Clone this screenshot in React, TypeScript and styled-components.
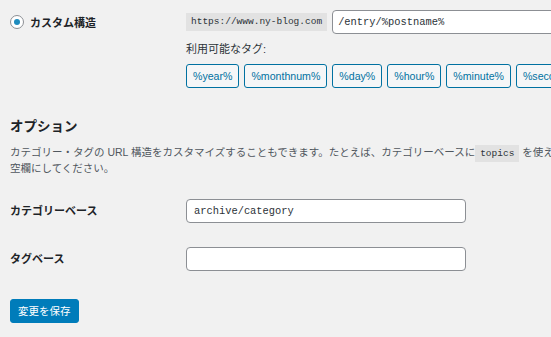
import React from 'react';
import styled, { createGlobalStyle } from 'styled-components';

const GlobalStyle = createGlobalStyle`
  html, body {
    margin: 0;
    padding: 0;
    background: #f1f1f1;
    overflow: hidden;
  }
  body {
    font-family: "Liberation Sans", "Noto Sans CJK JP", sans-serif;
    color: #1d2327;
  }
`;

const Page = styled.div`
  width: 900px;
  padding: 10px 0 20px 10px;
`;

const FieldRow = styled.div<{ $top?: number }>`
  display: grid;
  grid-template-columns: 176px 1fr;
  margin-top: ${(p) => p.$top ?? 0}px;
  align-items: ${(p) => (p.$top ? 'center' : 'start')};
`;

const RadioLabel = styled.label`
  display: flex;
  align-items: center;
  gap: 6px;
  height: 24px;
  font-size: 11px;
  font-weight: bold;
`;

const RadioMark = styled.span`
  width: 12px;
  height: 12px;
  border: 1px solid #8c8f94;
  border-radius: 50%;
  background: #fff;
  display: flex;
  align-items: center;
  justify-content: center;
  &::after {
    content: '';
    width: 6px;
    height: 6px;
    border-radius: 50%;
    background: #1e8cbe;
  }
`;

const UrlLine = styled.div`
  display: flex;
  align-items: center;
  gap: 5px;
`;

const Code = styled.code`
  display: inline-block;
  font-family: "Liberation Mono", monospace;
  font-size: 9.5px;
  line-height: 18px;
  padding: 0 5px;
  background: #e2e2e2;
  color: #2c3338;
`;

const TextInput = styled.div<{ $width: number; $pad?: number }>`
  box-sizing: border-box;
  width: ${(p) => p.$width}px;
  height: 24px;
  border: 1px solid #8c8f94;
  border-radius: 4px;
  background: #fff;
  padding: 0 ${(p) => p.$pad ?? 7}px;
  font-family: "Liberation Mono", monospace;
  font-size: 10.4px;
  line-height: 22px;
  color: #2c3338;
  white-space: nowrap;
`;

const TagsLabel = styled.div`
  margin-top: 7px;
  font-size: 11px;
  line-height: 16px;
  color: #2c3338;
`;

const Tags = styled.div`
  display: flex;
  gap: 5px;
  margin-top: 7px;
`;

const TagButton = styled.span`
  flex: none;
  height: 24px;
  box-sizing: border-box;
  padding: 0 6px;
  border: 1px solid #0071a1;
  border-radius: 3px;
  background: #f5f6f7;
  color: #0071a1;
  font-size: 10.6px;
  line-height: 22px;
`;

const Heading = styled.h2`
  margin: 30px 0 0;
  font-size: 13.5px;
  line-height: 18px;
  font-weight: bold;
  color: #1d2327;
`;

const Description = styled.p`
  margin: 9px 0 0;
  font-size: 10.5px;
  line-height: 15px;
  color: #50575e;
  white-space: nowrap;
  code {
    font-family: "Liberation Mono", monospace;
    font-size: 9.5px;
    background: #e2e2e2;
    color: #2c3338;
    padding: 3px 5px;
    margin: 0 3px 0 0;
  }
`;

const FieldLabel = styled.div`
  font-size: 11px;
  font-weight: bold;
  line-height: 24px;
`;

const SaveButton = styled.button`
  margin-top: 28px;
  height: 24px;
  padding: 0 7px;
  border: 1px solid #007cba;
  border-radius: 3px;
  background: #007cba;
  color: #fff;
  font-family: inherit;
  font-size: 10.5px;
  line-height: 22px;
`;

const tags = ['%year%', '%monthnum%', '%day%', '%hour%', '%minute%', '%second%', '%post_id%', '%postname%', '%category%', '%author%'];

export default function App() {
  return (
    <Page>
      <GlobalStyle />
      <FieldRow>
        <RadioLabel>
          <RadioMark />
          カスタム構造
        </RadioLabel>
        <div>
          <UrlLine>
            <Code>https://www.ny-blog.com</Code>
            <TextInput $width={400} $pad={5}>/entry/%postname%</TextInput>
          </UrlLine>
          <TagsLabel>利用可能なタグ:</TagsLabel>
          <Tags>
            {tags.map((t) => (
              <TagButton key={t}>{t}</TagButton>
            ))}
          </Tags>
        </div>
      </FieldRow>

      <Heading>オプション</Heading>
      <Description>
        カテゴリー・タグの URL 構造をカスタマイズすることもできます。たとえば、カテゴリーベースに<code>topics</code>を使えば、カテゴリーのリンクが https://www.ny-blog.com/topics/uncategorized/ のようになります。デフォルトのままにしたい場合は
        <br />
        空欄にしてください。
      </Description>

      <FieldRow $top={23}>
        <FieldLabel>カテゴリーベース</FieldLabel>
        <TextInput $width={280}>archive/category</TextInput>
      </FieldRow>
      <FieldRow $top={24}>
        <FieldLabel>タグベース</FieldLabel>
        <TextInput $width={280} />
      </FieldRow>

      <SaveButton>変更を保存</SaveButton>
    </Page>
  );
}
